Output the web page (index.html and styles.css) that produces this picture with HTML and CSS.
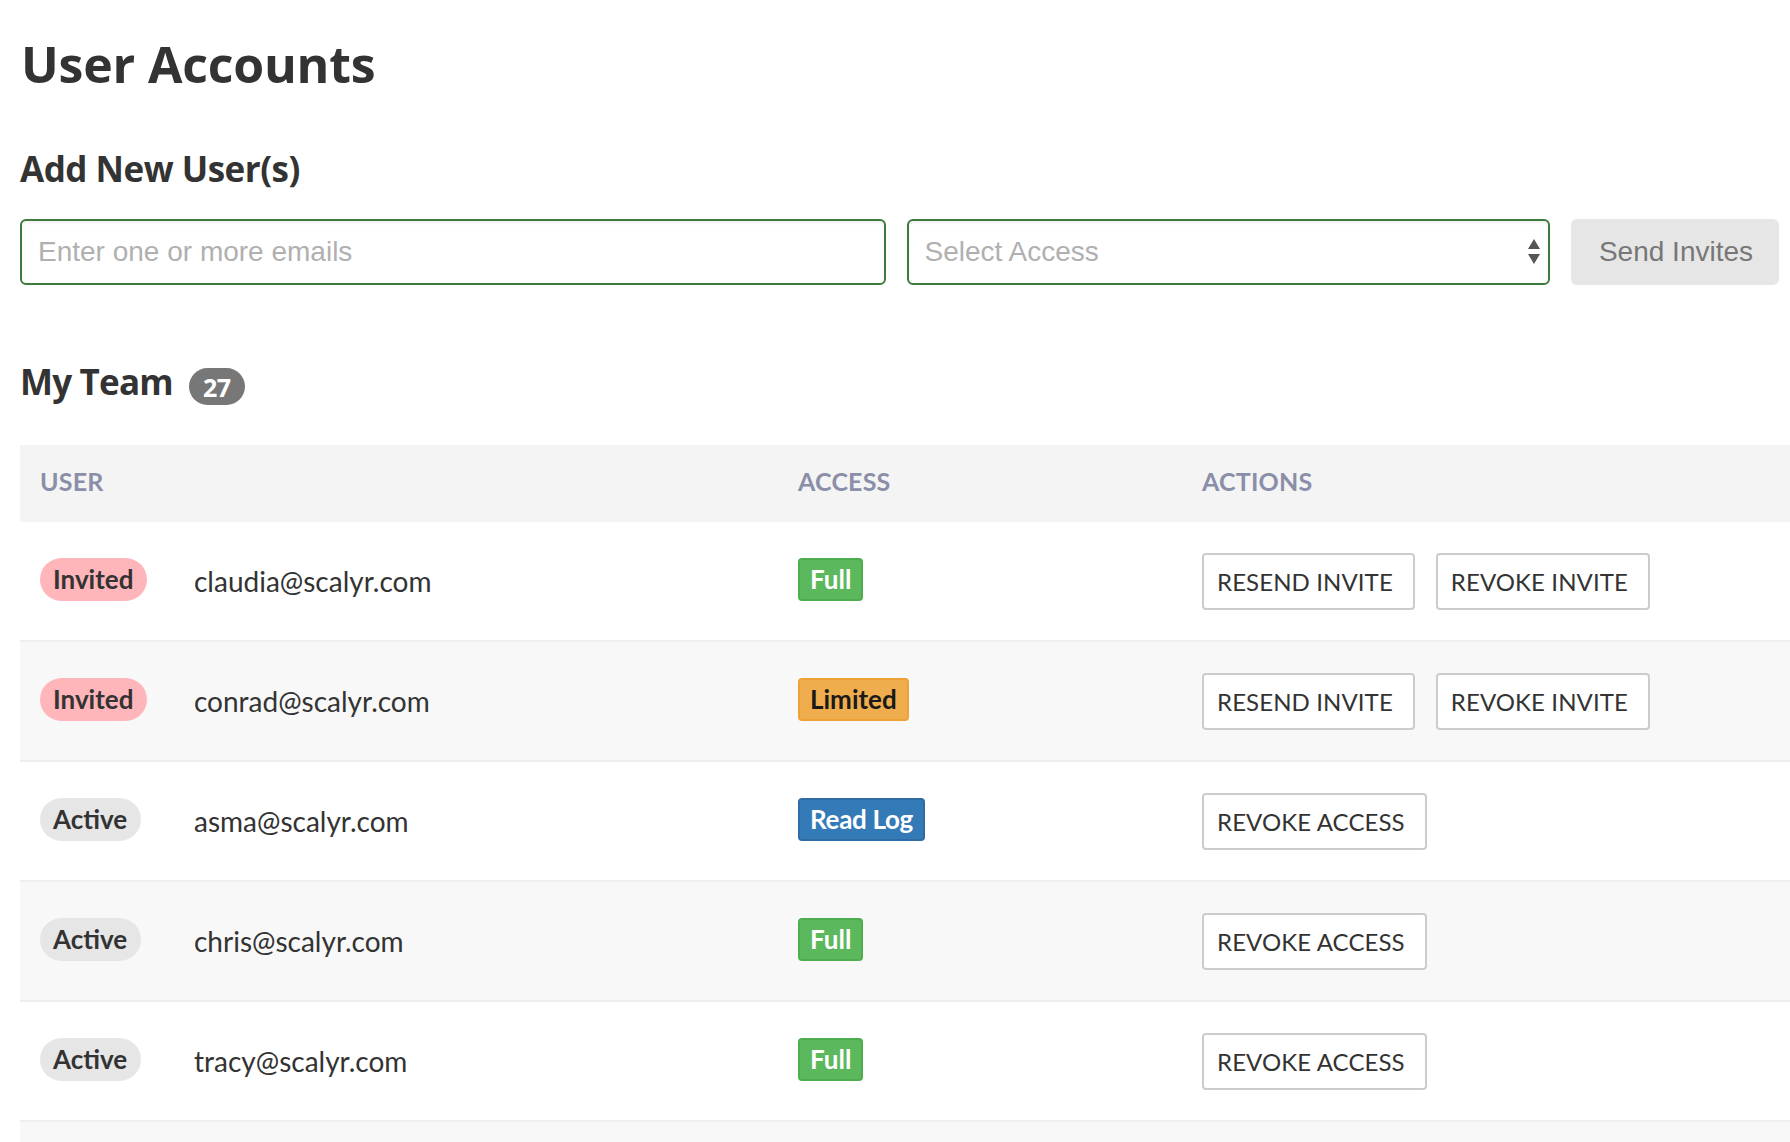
FILE: index.html
```html
<!DOCTYPE html>
<html lang="en">
<head>
<meta charset="utf-8">
<title>User Accounts</title>
<link rel="stylesheet" href="styles.css">
</head>
<body>
<main class="page">
  <h1 class="page-title">User Accounts</h1>

  <section class="add-users">
    <h2 class="section-title">Add New User(s)</h2>
    <form class="invite-form">
      <input class="field email-field" type="text" placeholder="Enter one or more emails">
      <div class="field select-field">
        <span class="select-placeholder">Select Access</span>
        <svg class="select-arrows" width="12" height="26" viewBox="0 0 12 26" aria-hidden="true">
          <path d="M6 0 L12 10 L0 10 Z" fill="#555"/>
          <path d="M0 15 L12 15 L6 25 Z" fill="#555"/>
        </svg>
      </div>
      <button class="send-btn" type="button">Send Invites</button>
    </form>
  </section>

  <section class="team">
    <div class="team-heading">
      <h2 class="section-title team-title">My Team</h2>
      <span class="count-badge">27</span>
    </div>

    <div class="team-table">
      <div class="table-row table-head">
        <div class="cell">USER</div>
        <div class="cell">ACCESS</div>
        <div class="cell">ACTIONS</div>
      </div>

      <div class="table-row">
        <div class="cell user-cell"><span class="status-wrap"><span class="status status-invited">Invited</span></span><span class="email">claudia@scalyr.com</span></div>
        <div class="cell"><span class="access access-full">Full</span></div>
        <div class="cell actions"><button class="action-btn" type="button">RESEND INVITE</button><button class="action-btn" type="button">REVOKE INVITE</button></div>
      </div>

      <div class="table-row">
        <div class="cell user-cell"><span class="status-wrap"><span class="status status-invited">Invited</span></span><span class="email">conrad@scalyr.com</span></div>
        <div class="cell"><span class="access access-limited">Limited</span></div>
        <div class="cell actions"><button class="action-btn" type="button">RESEND INVITE</button><button class="action-btn" type="button">REVOKE INVITE</button></div>
      </div>

      <div class="table-row">
        <div class="cell user-cell"><span class="status-wrap"><span class="status status-active">Active</span></span><span class="email">asma@scalyr.com</span></div>
        <div class="cell"><span class="access access-read">Read Log</span></div>
        <div class="cell actions"><button class="action-btn" type="button">REVOKE ACCESS</button></div>
      </div>

      <div class="table-row">
        <div class="cell user-cell"><span class="status-wrap"><span class="status status-active">Active</span></span><span class="email">chris@scalyr.com</span></div>
        <div class="cell"><span class="access access-full">Full</span></div>
        <div class="cell actions"><button class="action-btn" type="button">REVOKE ACCESS</button></div>
      </div>

      <div class="table-row">
        <div class="cell user-cell"><span class="status-wrap"><span class="status status-active">Active</span></span><span class="email">tracy@scalyr.com</span></div>
        <div class="cell"><span class="access access-full">Full</span></div>
        <div class="cell actions"><button class="action-btn" type="button">REVOKE ACCESS</button></div>
      </div>

      <div class="table-row">
        <div class="cell user-cell"></div>
        <div class="cell"></div>
        <div class="cell"></div>
      </div>
    </div>
  </section>
</main>
</body>
</html>
```

FILE: styles.css
```css
* {
  box-sizing: border-box;
}

html, body {
  margin: 0;
  padding: 0;
  background: #ffffff;
  overflow: hidden;
}

body {
  font-family: "Lato", "Open Sans", sans-serif;
  color: #333333;
}

.page {
  padding: 27px 11px 0 20px;
}

.page-title {
  margin: 0 0 0 1px;
  font-family: "Open Sans", sans-serif;
  font-weight: 700;
  font-size: 50px;
  line-height: 74px;
  color: #333333;
  letter-spacing: -0.2px;
}

.section-title {
  margin: 0;
  font-family: "Open Sans", sans-serif;
  font-weight: 700;
  font-size: 35px;
  line-height: 46px;
  color: #333333;
  letter-spacing: -0.5px;
}

.add-users .section-title {
  margin-top: 45px;
}

.invite-form {
  display: grid;
  grid-template-columns: 865fr 643fr 208px;
  column-gap: 21px;
  margin-top: 27px;
}

.field {
  height: 66px;
  border: 2px solid #3d7a3d;
  border-radius: 6px;
  background: #ffffff;
  font-family: "Liberation Sans", Arial, sans-serif;
  font-size: 28px;
  color: #333;
  box-shadow: inset 0 2px 3px rgba(0, 0, 0, 0.06);
}

.email-field {
  width: 100%;
  padding: 0 16px;
  outline: none;
}

.email-field::placeholder {
  color: #b0b0b0;
}

.select-field {
  display: flex;
  align-items: center;
  justify-content: space-between;
  padding: 0 8px 0 16px;
}

.select-placeholder {
  color: #b0b0b0;
}

.select-arrows {
  display: block;
}

.send-btn {
  height: 66px;
  border: none;
  border-radius: 6px;
  background: #e6e6e6;
  color: #777777;
  font-family: "Liberation Sans", Arial, sans-serif;
  font-size: 28px;
  padding: 0 0 0 2px;
}

.team {
  margin-top: 74px;
}

.team-heading {
  display: flex;
  align-items: center;
  gap: 16px;
}

.team-title {
  letter-spacing: -0.8px;
}

.count-badge {
  display: inline-flex;
  align-items: center;
  justify-content: center;
  width: 56px;
  height: 37px;
  border-radius: 19px;
  background: #777777;
  color: #ffffff;
  font-family: "Open Sans", sans-serif;
  font-weight: 700;
  font-size: 25px;
  margin-top: 9px;
  letter-spacing: -0.5px;
}

.team-table {
  margin-top: 40px;
  margin-right: -11px;
}

.table-row {
  display: grid;
  grid-template-columns: 758px 404px 1fr;
  align-items: center;
  height: 120px;
  padding-left: 20px;
  border-bottom: 2px solid #eef0f0;
}

.table-row:nth-child(odd) {
  background: #f8f8f8;
}

.table-row:nth-child(even) {
  background: #ffffff;
}

.table-head {
  height: 77px;
  padding-bottom: 6px;
  background: #f4f4f4 !important;
  border-bottom: none;
  font-family: "Lato", sans-serif;
  font-weight: 700;
  font-size: 25px;
  color: #8a8ea8;
  letter-spacing: 0.2px;
}

.user-cell {
  display: flex;
  align-items: center;
}

.status-wrap {
  width: 154px;
  flex: none;
}

.status {
  display: inline-block;
  height: 43px;
  line-height: 43px;
  padding: 0 14px 0 13px;
  border-radius: 22px;
  font-weight: 700;
  font-size: 26px;
  color: #333333;
  margin-top: -4px;
}

.status-invited {
  background: #ffb6bb;
}

.status-active {
  background: #e6e6e6;
}

.email {
  font-size: 28px;
  color: #333333;
}

.access {
  display: inline-block;
  height: 43px;
  line-height: 39px;
  padding: 0 10px;
  border-radius: 4px;
  border: 2px solid;
  font-weight: 700;
  font-size: 26px;
  margin-top: -4px;
}

.access-full {
  background: #5cb85c;
  border-color: #4cae4c;
  color: #ffffff;
}

.access-limited {
  background: #f0ad4e;
  border-color: #eea236;
  color: #1a1a1a;
}

.access-read {
  background: #337ab7;
  border-color: #2e6da4;
  color: #ffffff;
  letter-spacing: -0.3px;
}

.actions {
  display: flex;
  gap: 21px;
}

.action-btn {
  height: 57px;
  padding: 0 20px 0 13px;
  border: 2px solid #cccccc;
  border-radius: 4px;
  background: #ffffff;
  font-family: "Lato", sans-serif;
  font-size: 24px;
  color: #333333;
  letter-spacing: 0.1px;
  text-align: left;
}
```
